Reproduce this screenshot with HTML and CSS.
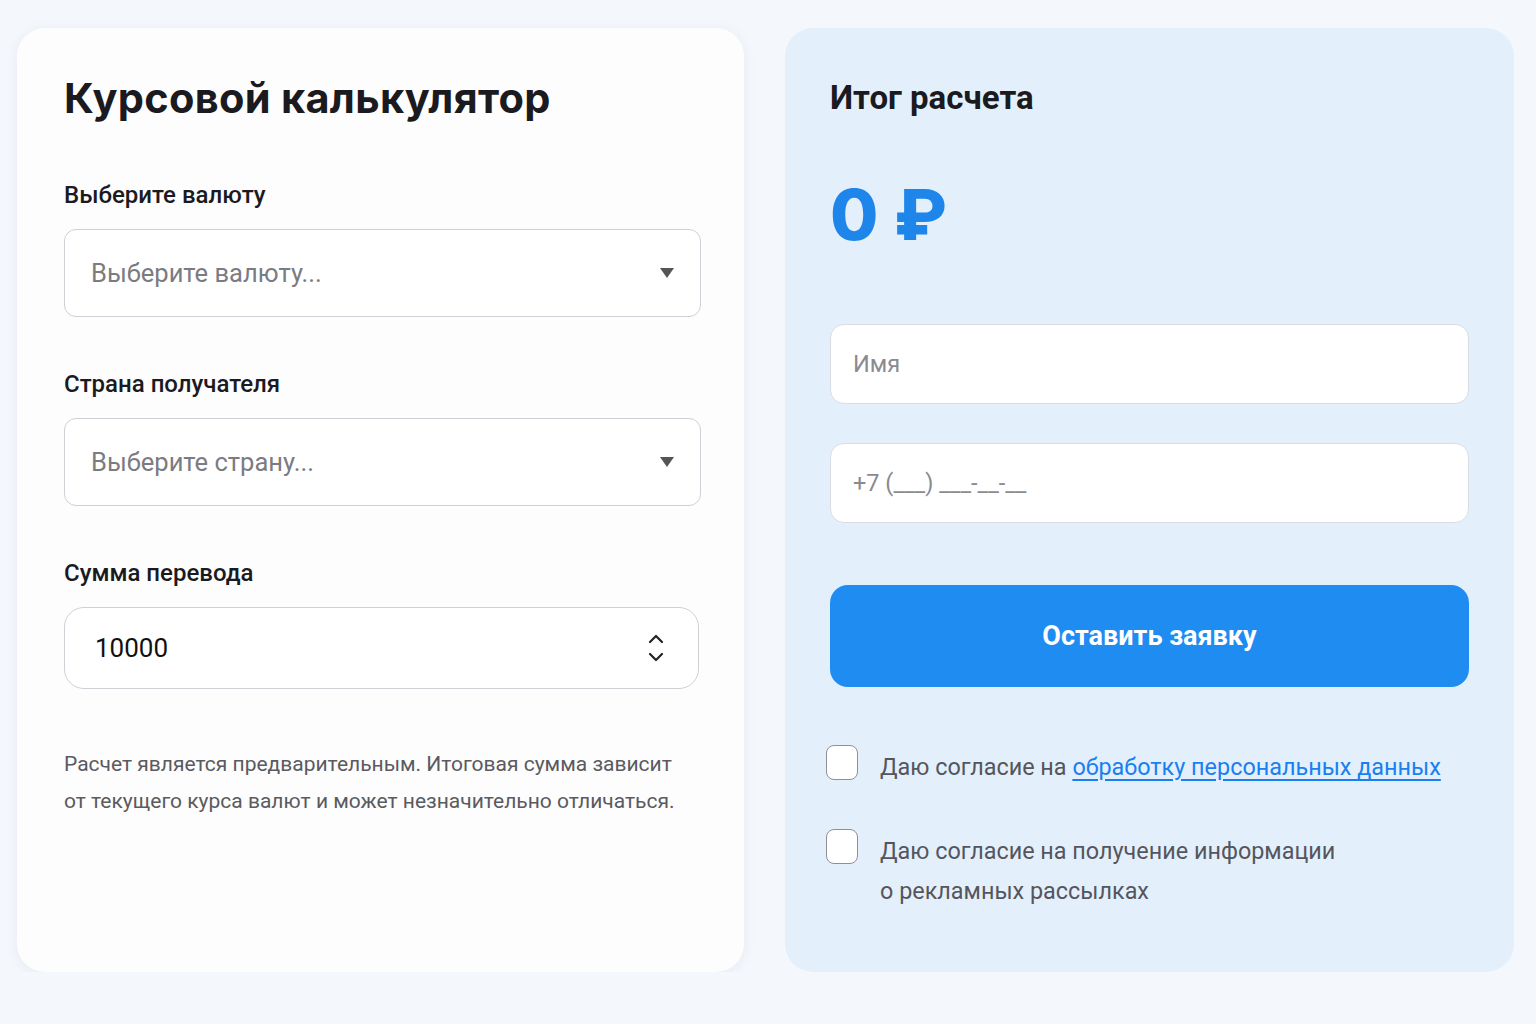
FILE: index.html
```html
<!DOCTYPE html>
<html lang="ru">

<head>
    <meta charset="UTF-8">
    <meta name="viewport" content="width=device-width, initial-scale=1.0">
    <title>Курсовой калькулятор</title>
    <link rel="stylesheet" href="styles.css">
</head>

<body>
    <div class="page">
        <!-- Калькулятор -->
        <div class="card calc">
            <h1>Курсовой калькулятор</h1>

            <div class="field">
                <label class="label">Выберите валюту</label>
                <div class="select">
                    <span class="placeholder">Выберите валюту...</span>
                    <span class="arrow"></span>
                </div>
            </div>

            <div class="field">
                <label class="label">Страна получателя</label>
                <div class="select">
                    <span class="placeholder">Выберите страну...</span>
                    <span class="arrow"></span>
                </div>
            </div>

            <div class="field">
                <label class="label">Сумма перевода</label>
                <div class="number">
                    <span class="value">10000</span>
                    <svg class="spin" width="18" height="30" viewBox="0 0 18 30">
                        <path d="M3 9 L9 3 L15 9" fill="none" stroke="#222" stroke-width="2.2" stroke-linecap="round" stroke-linejoin="round"/>
                        <path d="M3 21 L9 27 L15 21" fill="none" stroke="#222" stroke-width="2.2" stroke-linecap="round" stroke-linejoin="round"/>
                    </svg>
                </div>
            </div>

            <p class="note">Расчет является предварительным. Итоговая сумма зависит от текущего курса валют и может незначительно отличаться.</p>
        </div>

        <!-- Итог -->
        <div class="card result">
            <h2>Итог расчета</h2>
            <div class="total">0 ₽</div>

            <div class="input"><span class="placeholder small">Имя</span></div>
            <div class="input"><span class="placeholder small">+7 (___) ___-__-__</span></div>

            <button class="submit">Оставить заявку</button>

            <div class="agree first">
                <span class="check"></span>
                <span class="agree-text">Даю согласие на <a href="#">обработку персональных данных</a></span>
            </div>
            <div class="agree">
                <span class="check"></span>
                <span class="agree-text">Даю согласие на получение информации<br>о рекламных рассылках</span>
            </div>
        </div>
    </div>
</body>

</html>
```
FILE: styles.css
```css
/* General */
body {
    margin: 0;
    font-family: 'Roboto', 'Liberation Sans', sans-serif;
    background-color: #f4f7fc;
    color: #1a1a1f;
}

.page {
    display: flex;
    gap: 41px;
    padding: 28px 22px 0 17px;
}

.card {
    box-sizing: border-box;
    height: 944px;
    border-radius: 28px;
}

.calc {
    width: 727px;
    background-color: #fdfdfd;
    padding: 42px 43px 0 47px;
    box-shadow: 0 2px 14px rgba(40, 60, 100, 0.06);
}

.result {
    width: 729px;
    background-color: #e3f0fc;
    padding: 47px 45px 0 45px;
}

h1 {
    margin: 0 0 55px;
    font-family: 'Inter', 'Noto Sans', sans-serif;
    font-size: 41.5px;
    font-weight: 700;
    line-height: 56px;
    letter-spacing: 0.3px;
}

h2 {
    margin: 0 0 54px;
    font-size: 33px;
    font-weight: 700;
    line-height: 46px;
}

/* Fields */
.field {
    margin-bottom: 53px;
}

.label {
    display: block;
    font-size: 24px;
    font-weight: 500;
    margin-bottom: 20px;
}

.select {
    display: flex;
    align-items: center;
    justify-content: space-between;
    height: 88px;
    box-sizing: border-box;
    padding: 0 26px;
    border: 1.5px solid #cfd0d6;
    border-radius: 12px;
    background-color: #fff;
}

.placeholder {
    font-size: 25.5px;
    color: #7b7b82;
}

.placeholder.small {
    font-size: 23.5px;
    color: #8a8a90;
}

.arrow {
    width: 0;
    height: 0;
    border-left: 7px solid transparent;
    border-right: 7px solid transparent;
    border-top: 10px solid #555;
}

.number {
    display: flex;
    align-items: center;
    justify-content: space-between;
    width: 635px;
    height: 82px;
    box-sizing: border-box;
    padding: 0 33px 0 30px;
    border: 1.5px solid #cfd0d6;
    border-radius: 20px;
    background-color: #fff;
}

.value {
    font-size: 26px;
    color: #111;
}

.note {
    margin: 57px 0 0;
    font-size: 21px;
    line-height: 37px;
    color: #5a5a60;
    max-width: 625px;
}

/* Result */
.total {
    font-family: 'Inter', sans-serif;
    font-size: 70px;
    font-weight: 800;
    color: #1e86ea;
    line-height: 80px;
    margin-bottom: 69px;
}

.input {
    display: flex;
    align-items: center;
    height: 80px;
    box-sizing: border-box;
    padding: 0 22px;
    border: 1.5px solid #d9dde3;
    border-radius: 14px;
    background-color: #fff;
    margin-bottom: 39px;
}

.submit {
    display: block;
    width: 100%;
    height: 102px;
    margin-top: 62px;
    border: none;
    border-radius: 18px;
    background-color: #1e8cf1;
    color: #fff;
    font-family: 'Roboto', sans-serif;
    font-size: 27px;
    font-weight: 700;
    cursor: pointer;
}

.agree {
    display: flex;
    align-items: flex-start;
    gap: 22px;
    margin-left: -4px;
}

.agree.first {
    margin-top: 58px;
}

.agree + .agree {
    margin-top: 42px;
}

.check {
    flex: none;
    width: 30px;
    height: 33px;
    border: 1.5px solid #8f8f96;
    border-radius: 8px;
    background-color: #fff;
}

.agree-text {
    font-size: 23.4px;
    line-height: 40px;
    color: #55565d;
    margin-top: 2px;
}

.agree-text a {
    color: #1a7ff0;
    text-decoration: underline;
    text-underline-offset: 4px;
}
```
